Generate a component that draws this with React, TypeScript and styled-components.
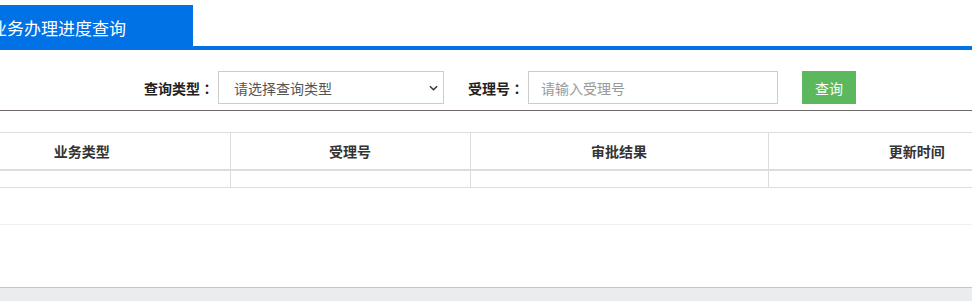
import { createGlobalStyle, styled } from 'styled-components';

const GlobalStyle = createGlobalStyle`
    html, body {
        margin: 0;
        padding: 0;
        background: #fff;
        overflow: hidden;
    }
    body {
        font-family: "Microsoft YaHei", "Noto Sans CJK SC", sans-serif;
        color: #333;
    }
    * {
        box-sizing: border-box;
    }
`;

const columns = [
    { title: '业务类型', width: 296 },
    { title: '受理号', width: 240 },
    { title: '审批结果', width: 298 },
    { title: '更新时间', width: 297 },
];

export default function App() {
    return (
        <>
            <GlobalStyle />
            <Page>
                <Inner>
                    <TabBar>
                        <Tab>业务办理进度查询</Tab>
                    </TabBar>
                    <SearchForm>
                        <Label>
                            查询类型<Colon>：</Colon>
                        </Label>
                        <SelectWrap>
                            <Select defaultValue=''>
                                <option value=''>请选择查询类型</option>
                            </Select>
                            <Chevron viewBox='0 0 10 6'>
                                <path d='M1 1l4 4 4-4' fill='none' stroke='#333' strokeWidth='1.6' />
                            </Chevron>
                        </SelectWrap>
                        <Label $gap>
                            受理号<Colon>：</Colon>
                        </Label>
                        <Input placeholder='请输入受理号' />
                        <SearchButton>查询</SearchButton>
                    </SearchForm>
                    <Table>
                        <thead>
                            <tr>
                                {columns.map((c) => (
                                    <HeadCell key={c.title} style={{ width: c.width }}>
                                        {c.title}
                                    </HeadCell>
                                ))}
                            </tr>
                        </thead>
                        <tbody>
                            <tr>
                                {columns.map((c) => (
                                    <BodyCell key={c.title} />
                                ))}
                            </tr>
                        </tbody>
                    </Table>
                    <Pager />
                </Inner>
                <Footer />
            </Page>
        </>
    );
}

const Page = styled.div`
    width: 972px;
    height: 301px;
    overflow: hidden;
    display: flex;
    flex-direction: column;
`;

const Inner = styled.div`
    width: 1131px;
    margin-left: -66px;
    flex: 0 0 287px;
`;

const TabBar = styled.div`
    padding-top: 5px;
    border-bottom: 4px solid #0171e6;
    width: 1038px;
`;

const Tab = styled.div`
    width: 259px;
    height: 41px;
    padding: 4px 0 0 56px;
    background: #0171e6;
    color: #fff;
    font-size: 17px;
    display: flex;
    align-items: center;
    white-space: nowrap;
`;

const SearchForm = styled.div`
    display: flex;
    justify-content: center;
    align-items: center;
    padding: 21px 0 6px 94px;
    border-bottom: 1px solid #706868;
    width: 1038px;
`;

const Label = styled.span<{ $gap?: boolean }>`
    display: flex;
    align-items: center;
    font-size: 14px;
    font-weight: bold;
    color: #222;
    margin-left: ${(p) => (p.$gap ? '24px' : '0')};
    margin-right: 4px;
    white-space: nowrap;
`;

const Colon = styled.span`
    display: inline-block;
    width: 14px;
    text-align: center;
    font-family: "Noto Sans CJK TC", sans-serif;
`;

const SelectWrap = styled.div`
    position: relative;
    width: 226px;
    height: 33px;
`;

const Select = styled.select`
    appearance: none;
    width: 100%;
    height: 100%;
    border: 1px solid #ccc;
    background: #fff;
    padding: 0 0 0 15px;
    font-family: inherit;
    font-size: 14px;
    color: #555;
    outline: none;
`;

const Chevron = styled.svg`
    position: absolute;
    right: 6px;
    top: 14px;
    width: 9px;
    height: 6px;
    pointer-events: none;
`;

const Input = styled.input`
    width: 250px;
    height: 33px;
    border: 1px solid #ccc;
    padding: 0 12px;
    font-family: inherit;
    font-size: 14px;
    color: #555;
    outline: none;
    &::placeholder {
        color: #999;
    }
`;

const SearchButton = styled.button`
    width: 54px;
    height: 33px;
    margin-left: 24px;
    border: none;
    background: #5cb85c;
    color: #fff;
    font-family: inherit;
    font-size: 14px;
    cursor: pointer;
`;

const Table = styled.table`
    width: 1131px;
    margin-top: 21px;
    border-collapse: collapse;
    table-layout: fixed;
    border-top: 1px solid #ddd;
`;

const HeadCell = styled.th`
    height: 37px;
    padding: 0;
    font-size: 14px;
    font-weight: bold;
    color: #333;
    text-align: center;
    border-left: 1px solid #ddd;
    border-bottom: 2px solid #ddd;
    &:first-child {
        border-left: none;
    }
`;

const BodyCell = styled.td`
    height: 18px;
    padding: 0;
    border-left: 1px solid #ddd;
    border-bottom: 1px solid #ddd;
    &:first-child {
        border-left: none;
    }
`;

const Pager = styled.div`
    margin-top: 36px;
    border-top: 1px solid #f0f0f0;
`;

const Footer = styled.div`
    flex: 1;
    border-top: 1px solid #c6c6c6;
    background: #ebecee;
`;
